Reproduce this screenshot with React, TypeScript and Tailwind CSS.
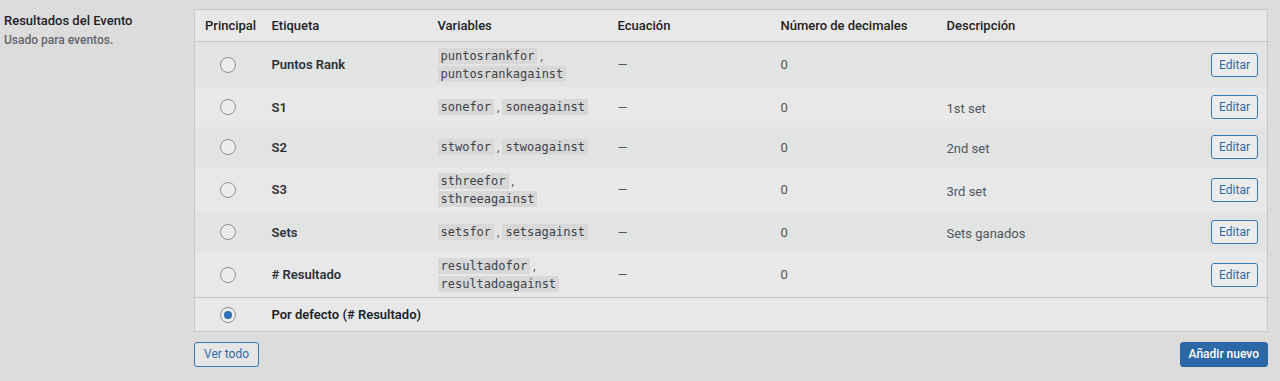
import * as React from "react";

type Row = {
  label: string;
  vars: [string, string];
  wrap: boolean;
  desc: string;
};

const ROWS: Row[] = [
  { label: "Puntos Rank", vars: ["puntosrankfor", "puntosrankagainst"], wrap: true, desc: "" },
  { label: "S1", vars: ["sonefor", "soneagainst"], wrap: false, desc: "1st set" },
  { label: "S2", vars: ["stwofor", "stwoagainst"], wrap: false, desc: "2nd set" },
  { label: "S3", vars: ["sthreefor", "sthreeagainst"], wrap: true, desc: "3rd set" },
  { label: "Sets", vars: ["setsfor", "setsagainst"], wrap: false, desc: "Sets ganados" },
  { label: "# Resultado", vars: ["resultadofor", "resultadoagainst"], wrap: true, desc: "" },
];

const sans = "font-['Roboto',_'Liberation_Sans',_sans-serif]";
const mono = "font-['DejaVu_Sans_Mono',_'Liberation_Mono',_monospace]";

const Radio = ({ checked = false }: { checked?: boolean }) => (
  <span className="mx-auto flex h-4 w-4 items-center justify-center rounded-full border border-[#8c8f94] bg-[#ececec]">
    {checked && <span className="h-2 w-2 rounded-full bg-[#2f6fb5]" />}
  </span>
);

const Code = ({ children }: { children: string }) => (
  <code className={mono + " bg-[#d8d8d8] px-[3px] py-[1px] text-[12px] leading-[14px] text-[#3c434a]"}>
    {children}
  </code>
);

export default function App() {
  return (
    <div className={sans + " flex min-h-[381px] bg-[#dcdcdc] pl-[4px] pr-[12px] pt-[9px] text-[13px] text-[#2c3338]"}>
      <div className="w-[190px] shrink-0 pt-[3px]">
        <div className="text-[13px] font-medium leading-[17px] text-[#1d2327]">Resultados del Evento</div>
        <div className="mt-[3px] text-[12px] font-medium leading-[16px] text-[#63676b]">Usado para eventos.</div>
      </div>

      <div className="flex-1">
        <table className="w-full table-fixed border-collapse border border-[#c6c7c9] bg-[#e8e8e8] leading-[17px]">
          <colgroup>
            <col className="w-[67px]" />
            <col className="w-[166px]" />
            <col className="w-[180px]" />
            <col className="w-[163px]" />
            <col className="w-[166px]" />
            <col />
            <col className="w-[70px]" />
          </colgroup>
          <thead>
            <tr className="border-b border-[#c6c7c9] text-left font-medium text-[#1d2327]">
              <th className="py-[7px] pl-[10px] font-medium">Principal</th>
              <th className="py-[7px] pl-[10px] font-medium">Etiqueta</th>
              <th className="py-[7px] pl-[10px] font-medium">Variables</th>
              <th className="py-[7px] pl-[10px] font-medium">Ecuación</th>
              <th className="py-[7px] pl-[10px] font-medium">Número de decimales</th>
              <th className="py-[7px] pl-[10px] font-medium">Descripción</th>
              <th />
            </tr>
          </thead>
          <tbody>
            {ROWS.map((r, i) => (
              <tr key={r.label} className={i % 2 === 0 ? "bg-[#e2e3e3]" : ""}>
                <td className="py-[5px] align-middle">
                  <Radio />
                </td>
                <td className="py-[5px] pl-[10px] font-semibold text-[#2c3338]">{r.label}</td>
                <td className="py-[5px] pl-[10px] leading-[17px] text-[#50575e]">
                  <Code>{r.vars[0]}</Code>
                  <span className="text-[12px]"> , </span>
                  {r.wrap && <br />}
                  <Code>{r.vars[1]}</Code>
                </td>
                <td className="py-[5px] pl-[10px] text-[#50575e]">—</td>
                <td className="py-[5px] pl-[10px] text-[#50575e]">0</td>
                <td className="py-[5px] pl-[10px] pt-[8px] text-[#50575e]">{r.desc}</td>
                <td className="py-[8px] pr-[9px] text-right">
                  <button className="h-[24px] rounded-[3px] border border-[#3a77b5] bg-[#ececec] px-[7px] text-[12px] leading-[22px] text-[#2f6aa6]">
                    Editar
                  </button>
                </td>
              </tr>
            ))}
            <tr className="border-t border-[#c6c7c9]">
              <td className="py-[8px]">
                <Radio checked />
              </td>
              <td colSpan={6} className="py-[8px] pl-[10px] font-semibold text-[#1d2327]">
                Por defecto (# Resultado)
              </td>
            </tr>
          </tbody>
        </table>

        <div className="mt-[10px] flex items-start justify-between">
          <button className="h-[25px] rounded-[3px] border border-[#3a77b5] bg-[#e6e6e6] px-[9px] text-[12px] leading-[23px] text-[#2f6aa6]">
            Ver todo
          </button>
          <button className="h-[25px] rounded-[3px] border border-[#2a64a0] bg-[#2c68a6] px-[8px] text-[12px] font-medium leading-[23px] text-white">
            Añadir nuevo
          </button>
        </div>
      </div>
    </div>
  );
}
